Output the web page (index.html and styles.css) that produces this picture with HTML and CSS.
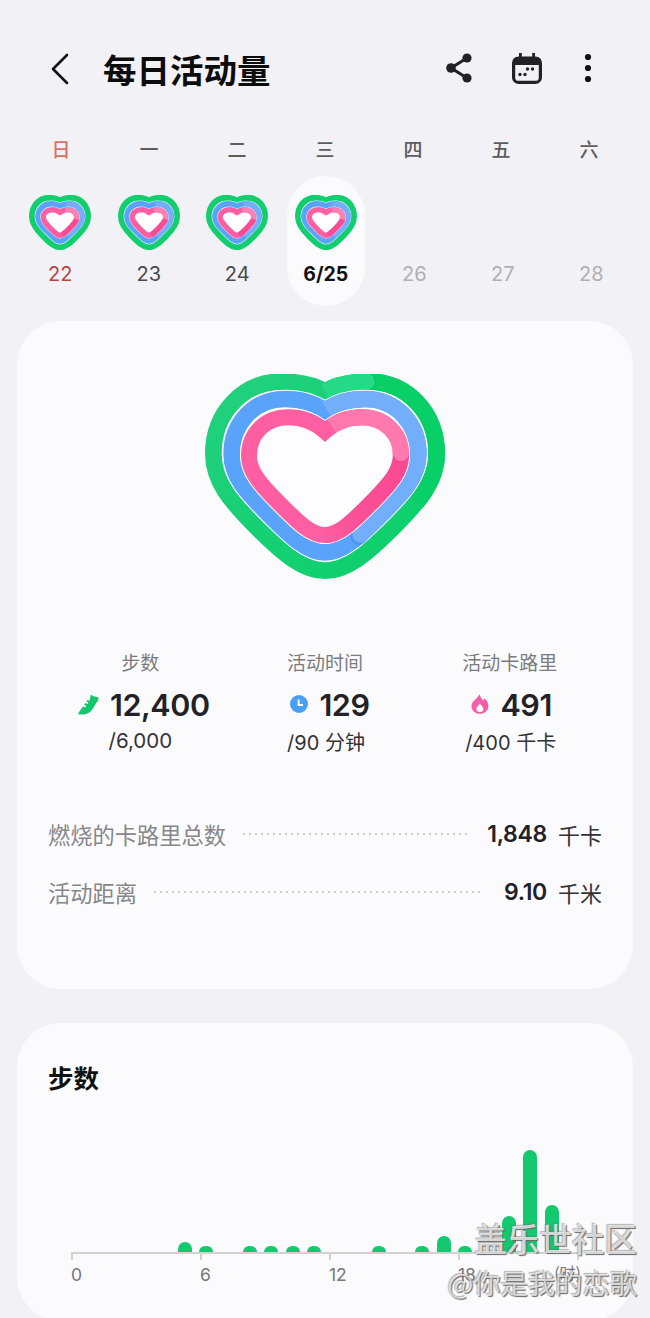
FILE: index.html
```html
<!DOCTYPE html>
<html lang="zh-CN">
<head>
<meta charset="utf-8">
<title>每日活动量</title>
<link rel="stylesheet" href="styles.css">
</head>
<body>
<svg class="sprite" aria-hidden="true">
  <defs>
    <linearGradient id="greenGrad" x1="0" y1="0" x2="1" y2="1">
      <stop offset="0" stop-color="#22d07e"/>
      <stop offset="1" stop-color="#0bd06a"/>
    </linearGradient>
    <linearGradient id="pinkGrad" gradientUnits="userSpaceOnUse" x1="620" y1="330" x2="380" y2="530">
      <stop offset="0" stop-color="#fb4a92"/>
      <stop offset=".55" stop-color="#fb4f96"/>
      <stop offset="1" stop-color="#ff5fa2"/>
    </linearGradient>
    <symbol id="heart" viewBox="45 45 720 615" preserveAspectRatio="none">
      <path fill="none" stroke="url(#greenGrad)" stroke-width="50" stroke-linejoin="round" d="M405 97C365 75 325 68 275 68C160 68 70 160 70 285C70 365 120 425 200 505C280 585 340 635 405 635C470 635 530 585 610 505C690 425 740 365 740 285C740 160 650 68 535 68C485 68 445 75 405 97Z"/>
      <path fill="none" stroke="#08cf66" stroke-width="50" d="M535 68C650 68 740 160 740 285C740 340 716 385 680 430"/>
      <circle cx="533" cy="68" r="27" fill="#06b75a" fill-opacity=".35"/>
      <path fill="none" stroke="#26d986" stroke-width="50" d="M405 97C445 75 485 68 530 68"/>
      <circle cx="530" cy="68" r="25" fill="#26d986"/>
      <path fill="#fdfdff" stroke="#fff" stroke-width="56" stroke-linejoin="miter" d="M405 155C370 130 330 120 285 120C190 120 125 195 125 285C125 350 165 395 235 465C300 530 350 580 405 580C460 580 510 530 575 465C645 395 685 350 685 285C685 195 620 120 525 120C480 120 440 130 405 155Z"/>
      <path fill="none" stroke="#5aa3fb" stroke-width="50" stroke-linejoin="miter" d="M405 155C370 130 330 120 285 120C190 120 125 195 125 285C125 350 165 395 235 465C300 530 350 580 405 580C460 580 510 530 575 465C645 395 685 350 685 285C685 195 620 120 525 120C480 120 440 130 405 155Z"/>
      <circle cx="507" cy="531" r="27" fill="#3f7fd8" fill-opacity=".4"/>
      <path fill="none" stroke="#73aefb" stroke-width="50" d="M410 151C442 130 480 120 525 120C620 120 685 195 685 285C685 350 645 395 575 465C555 485 535 505 512 526"/>
      <circle cx="512" cy="526" r="25" fill="#73aefb"/>
      <path fill="#fdfdff" stroke="#fff" stroke-width="54" stroke-linejoin="miter" d="M405 217C375 190 335 175 295 175C225 175 177 225 177 290C177 335 205 370 265 430C320 485 360 528 405 528C450 528 490 485 545 430C605 370 633 335 633 290C633 225 585 175 515 175C475 175 435 190 405 217Z"/>
      <path fill="none" stroke="#ff5fa2" stroke-width="48" stroke-linejoin="miter" d="M405 217C375 190 335 175 295 175C225 175 177 225 177 290C177 335 205 370 265 430C320 485 360 528 405 528C450 528 490 485 545 430C605 370 633 335 633 290C633 225 585 175 515 175C475 175 435 190 405 217Z"/>
      <path fill="none" stroke="url(#pinkGrad)" stroke-width="48" d="M633 285C633 335 605 370 545 430C490 485 450 528 405 528"/>
      <circle cx="633" cy="285" r="26" fill="#e93c85" fill-opacity=".35"/>
      <path fill="none" stroke="#ff78ae" stroke-width="48" d="M425 201C450 184 480 175 515 175C585 175 633 225 633 283"/>
      <circle cx="633" cy="283" r="24" fill="#ff78ae"/>
    </symbol>
    <symbol id="heart-small" viewBox="45 45 720 615" preserveAspectRatio="none">
      <path fill="none" stroke="#12ce6e" stroke-width="70" stroke-linejoin="round" d="M405 108C365 85 325 78 275 78C165 78 80 165 80 285C80 365 125 425 205 500C285 578 340 627 405 627C470 627 525 578 605 500C685 425 730 365 730 285C730 165 645 78 535 78C485 78 445 85 405 108Z"/>
      <path fill="#fdfdff" stroke="#e8f4ff" stroke-width="74" stroke-linejoin="round" d="M405 172C375 152 340 144 300 144C215 144 147 205 147 285C147 345 185 385 245 442C310 505 355 561 405 561C455 561 500 505 565 442C625 385 663 345 663 285C663 205 595 144 510 144C470 144 435 152 405 172Z"/>
      <path fill="none" stroke="#5aa3fb" stroke-width="62" stroke-linejoin="round" d="M405 172C375 152 340 144 300 144C215 144 147 205 147 285C147 345 185 385 245 442C310 505 355 561 405 561C455 561 500 505 565 442C625 385 663 345 663 285C663 205 595 144 510 144C470 144 435 152 405 172Z"/>
      <path fill="none" stroke="#73aefb" stroke-width="62" stroke-linecap="round" d="M510 144C595 144 663 205 663 285C663 345 625 385 565 442C550 457 535 472 520 487"/>
      <path fill="#fdfdff" stroke="#f3e6f4" stroke-width="70" stroke-linejoin="round" d="M405 240C380 220 350 208 315 208C255 208 211 245 211 295C211 335 240 365 285 410C330 455 370 497 405 497C440 497 480 455 525 410C570 365 599 335 599 295C599 245 555 208 495 208C460 208 430 220 405 240Z"/>
      <path fill="none" stroke="#ff5fa2" stroke-width="60" stroke-linejoin="round" d="M405 240C380 220 350 208 315 208C255 208 211 245 211 295C211 335 240 365 285 410C330 455 370 497 405 497C440 497 480 455 525 410C570 365 599 335 599 295C599 245 555 208 495 208C460 208 430 220 405 240Z"/>
      <path fill="none" stroke="#ff80b4" stroke-width="60" stroke-linecap="round" d="M495 208C555 208 599 245 599 290"/>
      <path fill="none" stroke="#fb4b93" stroke-width="60" d="M599 320C585 350 560 375 525 410C490 445 460 475 430 490"/>
    </symbol>
  </defs>
</svg>

<header class="topbar">
  <svg class="back" viewBox="0 0 18 32"><polyline points="16,2 2,16 16,30"/></svg>
  <h1 class="title">每日活动量</h1>
  <div class="actions">
    <svg class="ic-share" viewBox="0 0 26 30">
      <polyline points="21,5 5,15 21,25"/>
      <circle cx="21" cy="5" r="4.6"/><circle cx="5" cy="15" r="4.8"/><circle cx="21" cy="25" r="4.6"/>
    </svg>
    <svg class="ic-cal" viewBox="0 0 30 31">
      <path class="cal-top" d="M7 0.5a1.4 1.4 0 0 1 2.8 0V4h10.4V0.5a1.4 1.4 0 0 1 2.8 0V4h1a5 5 0 0 1 5 5v3H1V9a5 5 0 0 1 5-5h1Z"/>
      <rect class="cal-body" x="1.6" y="5" width="26.8" height="24.4" rx="5"/>
      <circle cx="8" cy="21.5" r="1.7"/><circle cx="13" cy="21.5" r="1.7"/><circle cx="15.5" cy="16" r="1.7"/><circle cx="20.5" cy="16" r="1.7"/>
    </svg>
    <svg class="ic-more" viewBox="0 0 8 30">
      <circle cx="4" cy="4" r="3.1"/><circle cx="4" cy="15" r="3.1"/><circle cx="4" cy="26" r="3.1"/>
    </svg>
  </div>
</header>

<section class="week-labels">
  <div class="wk wk-sun">日</div><div class="wk">一</div><div class="wk">二</div><div class="wk">三</div><div class="wk">四</div><div class="wk">五</div><div class="wk">六</div>
</section>
<section class="week-days">
  <div class="day day-sun"><svg class="heart-sm"><use href="#heart-small"/></svg><span class="day-num">22</span></div>
  <div class="day"><svg class="heart-sm"><use href="#heart-small"/></svg><span class="day-num">23</span></div>
  <div class="day"><svg class="heart-sm"><use href="#heart-small"/></svg><span class="day-num">24</span></div>
  <div class="day day-on"><svg class="heart-sm"><use href="#heart-small"/></svg><span class="day-num">6/25</span></div>
  <div class="day day-off"><div class="heart-none"></div><span class="day-num">26</span></div>
  <div class="day day-off"><div class="heart-none"></div><span class="day-num">27</span></div>
  <div class="day day-off"><div class="heart-none"></div><span class="day-num">28</span></div>
</section>

<section class="card card-main">
  <svg class="heart-lg"><use href="#heart"/></svg>

  <div class="stats">
    <div class="stat">
      <div class="stat-label">步数</div>
      <div class="stat-value">
        <svg class="ic-shoe" viewBox="0 0 21 21"><path d="M12.8.6L15.4 2.2L19.4 3C20.6 3.5 20.8 5 20.2 6L14.2 15.4C12 18.6 8.4 20.6 4.4 20.6H1.7C.4 20.6 0 19.4.7 18.4L5 12.4L7.2 13.6L8.2 12L6.2 10.8L7.4 9L9.4 10.1L10.4 8.5L8.5 7.4L9.6 5.8L11.6 6.9Z"/></svg>
        <span>12,400</span>
      </div>
      <div class="stat-goal">/6,000</div>
    </div>
    <div class="stat">
      <div class="stat-label">活动时间</div>
      <div class="stat-value">
        <svg class="ic-clock" viewBox="0 0 18 18"><circle cx="9" cy="9" r="9"/><polyline points="8.6,4.4 8.6,10 13,10"/></svg>
        <span>129</span>
      </div>
      <div class="stat-goal">/90 分钟</div>
    </div>
    <div class="stat">
      <div class="stat-label">活动卡路里</div>
      <div class="stat-value">
        <svg class="ic-flame" viewBox="0 0 18 20"><path class="flame-out" d="M8.5 0C9.2 3.5 11 4.5 12 6.5C12.8 5.8 13.3 5 13.5 4.2C15.8 6 17.4 9 17.4 12C17.4 16.5 13.7 19.8 8.9 19.8C4.1 19.8.5 16.5.5 12C.5 7 6.5 5 8.5 0Z"/><path class="flame-in" d="M8.9 9.6C10 11.8 12.4 12.8 12.4 15C12.4 17 10.8 18 8.9 18C7 18 5.4 17 5.4 15C5.4 13 7.8 12 8.9 9.6Z"/></svg>
        <span>491</span>
      </div>
      <div class="stat-goal">/400 千卡</div>
    </div>
  </div>

  <div class="rows">
    <div class="row">
      <span class="row-label">燃烧的卡路里总数</span>
      <span class="row-dots"></span>
      <span class="row-num">1,848</span>
      <span class="row-unit">千卡</span>
    </div>
    <div class="row">
      <span class="row-label">活动距离</span>
      <span class="row-dots"></span>
      <span class="row-num">9.10</span>
      <span class="row-unit">千米</span>
    </div>
  </div>
</section>

<section class="card card-steps">
  <h2 class="steps-title">步数</h2>
  <div class="bars">
    <div class="bar" style="height:0"></div><div class="bar" style="height:0"></div><div class="bar" style="height:0"></div><div class="bar" style="height:0"></div><div class="bar" style="height:0"></div>
    <div class="bar" style="height:10px"></div><div class="bar" style="height:6px"></div><div class="bar" style="height:0"></div>
    <div class="bar" style="height:6px"></div><div class="bar" style="height:6px"></div><div class="bar" style="height:6px"></div><div class="bar" style="height:6px"></div>
    <div class="bar" style="height:0"></div><div class="bar" style="height:0"></div>
    <div class="bar" style="height:6px"></div><div class="bar" style="height:0"></div>
    <div class="bar" style="height:6px"></div><div class="bar" style="height:16px"></div><div class="bar" style="height:6px"></div><div class="bar" style="height:0"></div>
    <div class="bar" style="height:36px"></div><div class="bar" style="height:102px"></div><div class="bar" style="height:47px"></div><div class="bar" style="height:0"></div>
  </div>
  <div class="axis"><i></i><i></i><i></i><i></i></div>
  <div class="axis-labels"><span>0</span><span>6</span><span>12</span><span class="axis-last"><span>18</span><span>(时)</span></span></div>
</section>

<div class="watermark">
  <div class="wm-a">盖乐世社区</div>
  <div class="wm-b">@你是我的恋歌</div>
</div>
</body>
</html>
```
FILE: styles.css
```css
* { box-sizing: border-box; }
html, body { margin: 0; padding: 0; }
body {
  position: relative;
  width: 650px;
  height: 1318px;
  overflow: hidden;
  background: #f2f2f6;
  color: #222226;
  font-family: Inter, "Noto Sans CJK SC", sans-serif;
}
.sprite { position: absolute; width: 0; height: 0; }

/* top bar */
.topbar {
  display: flex;
  align-items: center;
  height: 60px;
  margin-top: 39px;
  padding: 0 58px 0 51px;
}
.back { width: 18px; height: 32px; }
.back polyline { fill: none; stroke: #111; stroke-width: 2.6; stroke-linecap: round; stroke-linejoin: round; }
.title {
  margin: 0 0 0 34px;
  font-size: 33.5px;
  font-weight: 700;
  line-height: 44px;
  color: #0c0c0c;
  font-family: "Noto Sans CJK SC", sans-serif;
}
.actions { display: flex; align-items: center; margin: -2px 0 0 auto; }
.ic-share { width: 26px; height: 30px; margin-right: 40px; }
.ic-share polyline { fill: none; stroke: #222226; stroke-width: 3.2; stroke-linejoin: round; }
.ic-share circle { fill: #222226; }
.ic-cal { width: 30px; height: 31px; margin-right: 42px; }
.cal-top { fill: #222226; }
.cal-body { fill: none; stroke: #222226; stroke-width: 3.2; }
.ic-cal circle { fill: #222226; }
.ic-more { width: 8px; height: 30px; }
.ic-more circle { fill: #111; }

/* week */
.week-labels {
  display: grid;
  grid-template-columns: repeat(7, 88px);
  padding: 0 17px;
  margin-top: 35px;
}
.week-days {
  display: grid;
  grid-template-columns: repeat(7, 88.5px);
  padding-left: 16px;
  margin-top: 12px;
}
.wk {
  height: 30px;
  line-height: 30px;
  text-align: center;
  font-size: 19px;
  font-weight: 500;
  color: #5d5d60;
  font-family: "Noto Sans CJK SC", sans-serif;
}
.wk-sun { color: #d9706c; }
.day {
  width: 78px;
  height: 130px;
  margin: 0 auto;
  padding-top: 19px;
  display: flex;
  flex-direction: column;
  align-items: center;
  border-radius: 39px;
}
.heart-sm { width: 62px; height: 55px; display: block; flex: none; }
.heart-none { height: 55px; flex: none; }
.day-num {
  margin-top: 10px;
  line-height: 28px;
  font-size: 20px;
  color: #4a4a4d;
  white-space: nowrap;
}
.day-sun .day-num { color: #b8433f; }
.day-off .day-num { color: #b0b0b2; }
.day-on { background: #fbfbfe; }
.day-on .day-num { color: #111; font-weight: 700; font-size: 19.5px; }

/* cards */
.card {
  margin: 0 17px;
  background: #fbfbfe;
  border-radius: 44px;
}
.card-main {
  margin-top: 15px;
  height: 668px;
  padding: 53px 31px 0;
}
.heart-lg { display: block; width: 240px; height: 205px; margin: 0 auto; }

.stats {
  display: grid;
  grid-template-columns: repeat(3, 1fr);
  margin-top: 71px;
  text-align: center;
}
.stat-label {
  line-height: 24px;
  font-size: 19px;
  color: #7b7b7e;
  font-family: "Noto Sans CJK SC", sans-serif;
}
.stat-value {
  display: flex;
  align-items: center;
  justify-content: center;
  gap: 11px;
  height: 40px;
  margin-top: 10px;
  padding-left: 7px;
  font-size: 30.5px;
  font-weight: 600;
  letter-spacing: -.4px;
}
.stat:nth-child(2) .stat-value { padding-left: 10px; }
.stat:nth-child(3) .stat-value { padding-left: 4px; }
.stat-goal {
  margin-top: 3px;
  line-height: 28px;
  font-size: 20.5px;
  color: #333336;
}
.stat:nth-child(n+2) .stat-goal { margin-top: 5px; font-size: 20px; padding-left: 2px; }
.ic-shoe { width: 21px; height: 21px; }
.ic-shoe path { fill: #14c76c; }
.ic-clock { width: 18px; height: 18px; }
.ic-clock circle { fill: #4a9ff5; }
.ic-clock polyline { fill: none; stroke: #fff; stroke-width: 1.8; }
.ic-flame { width: 18px; height: 20px; }
.flame-out { fill: #f15fa9; }
.flame-in { fill: #fff; }

.rows { margin-top: 61px; display: flex; flex-direction: column; gap: 26px; }
.row {
  display: flex;
  align-items: center;
  height: 32px;
}
.row-label {
  font-size: 22.25px;
  line-height: 32px;
  color: #87878a;
  font-family: "Noto Sans CJK SC", sans-serif;
}
.row-dots {
  flex: 1;
  height: 2px;
  margin: 0 20px 1px 17px;
  background: radial-gradient(circle at 1px 1px, #cdcdd1 1px, transparent 1.1px) 0 0 / 6px 2px repeat-x;
}
.row-num { font-size: 23px; font-weight: 600; letter-spacing: -.3px; color: #222226; }
.row-unit {
  margin-left: 11px;
  font-size: 22px;
  color: #333336;
  font-family: "Noto Sans CJK SC", sans-serif;
}

/* steps */
.card-steps {
  margin-top: 34px;
  height: 298px;
  padding-top: 38px;
}
.steps-title {
  margin: 0 0 0 31px;
  font-size: 25.5px;
  font-weight: 700;
  line-height: 32px;
  color: #111;
  font-family: "Noto Sans CJK SC", sans-serif;
}
.bars {
  display: grid;
  grid-template-columns: repeat(24, 21.6px);
  align-items: end;
  height: 159px;
  padding-left: 49px;
}
.bar {
  justify-self: center;
  width: 14px;
  background: #12c96e;
  border-radius: 7px 7px 0 0;
}
.axis {
  display: grid;
  grid-template-columns: 129px 129px 129px 121px;
  margin-left: 54px;
  width: 510px;
  height: 8px;
}
.axis i {
  border-top: 2px solid #d2d2d2;
  border-left: 2px solid #d2d2d2;
}
.axis i:last-child { border-right: 2px solid #d2d2d2; }
.axis-labels {
  display: grid;
  grid-template-columns: 129px 129px 129px 123px;
  margin: 3px 0 0 54px;
  width: 510px;
  line-height: 24px;
  font-size: 17.5px;
  color: #77777a;
}
.axis-last { display: flex; justify-content: space-between; }
.axis-last span:last-child { position: relative; top: -3px; font-family: "Noto Sans CJK SC", sans-serif; font-size: 16px; }

/* watermark */
.watermark {
  position: absolute;
  right: 13px;
  top: 1218px;
  text-align: right;
  font-family: "Noto Sans CJK SC", sans-serif;
  color: rgba(238, 238, 238, .82);
  text-shadow: 1px 1px 1px #666, -1px -1px 1px rgba(110, 110, 110, .5);
}
.wm-a { font-size: 32.5px; line-height: 40px; font-weight: 500; }
.wm-b { font-size: 27.5px; line-height: 36px; margin-top: 6px; letter-spacing: -.2px; color: rgba(240,240,240,.75); }
```
